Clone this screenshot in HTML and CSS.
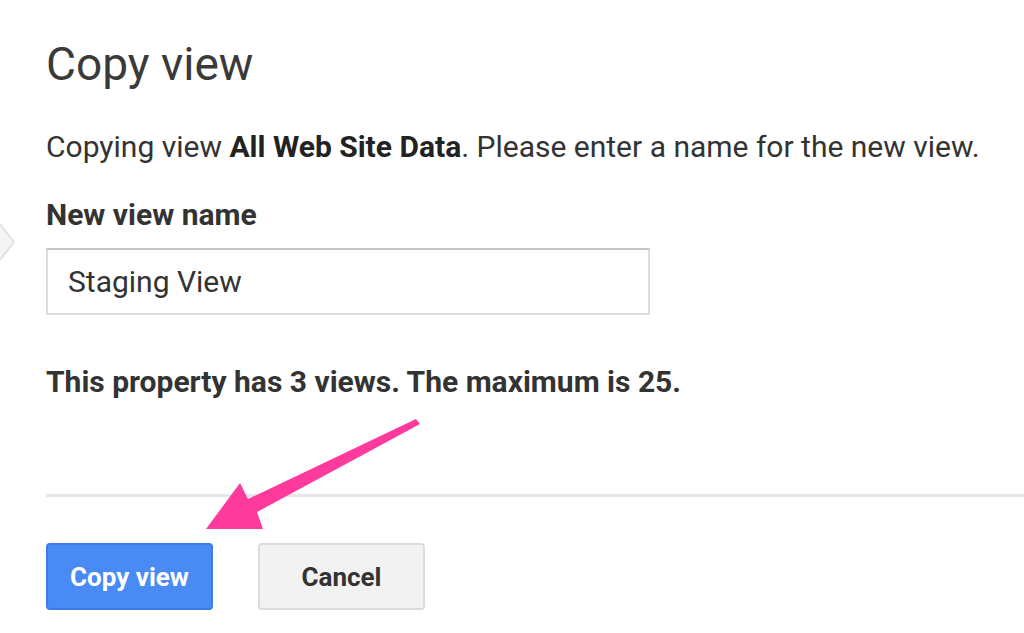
FILE: index.html
```html
<!DOCTYPE html>
<html lang="en">
<head>
    <meta charset="UTF-8">
    <title>Copy view</title>
    <link rel="stylesheet" href="styles.css">
</head>
<body>
    <!-- edge of the panel behind the dialog -->
    <svg class="side-chevron" width="16" height="40" viewBox="0 0 16 40">
        <path d="M0 2 L14 20 L0 38" fill="#f4f4f4" stroke="#e2e2e2" stroke-width="2"/>
    </svg>

    <div class="dialog">
        <h1 class="title">Copy view</h1>

        <p class="intro">Copying view <b>All Web Site Data</b>. Please enter a name for the new view.</p>

        <div class="form-group">
            <label for="viewName">New view name</label>
            <input type="text" id="viewName" value="Staging View">
        </div>

        <p class="limit">This property has 3 views. The maximum is 25.</p>

        <div class="actions">
            <button class="btn btn-primary">Copy view</button>
            <button class="btn btn-default">Cancel</button>
        </div>
    </div>

    <!-- pink callout arrow -->
    <svg class="callout" width="1024" height="633" viewBox="0 0 1024 633">
        <polygon points="416,419 420,424 257,512 263,529 206,529 240,483 248,499" fill="#ff3a9d"/>
    </svg>
</body>
</html>
```

FILE: styles.css
```css
body {
    margin: 0;
    background-color: #fff;
    font-family: Roboto, 'Liberation Sans', Arial, sans-serif;
    color: #333;
    overflow: hidden;
}
.dialog {
    padding: 32px 0 0 46px;
}
.title {
    margin: 0;
    font-size: 46px;
    font-weight: 400;
    line-height: 64px;
    color: #3a3a3a;
}
.intro {
    margin: 33px 0 0;
    font-size: 30px;
    line-height: 36px;
    color: #333;
}
.intro b {
    color: #222;
}
.form-group {
    margin-top: 32px;
}
label {
    display: block;
    font-size: 30px;
    font-weight: bold;
    line-height: 36px;
    color: #333;
    margin-bottom: 15px;
}
input {
    display: block;
    width: 604px;
    height: 67px;
    box-sizing: border-box;
    padding: 0 20px;
    border: 2px solid #dcdcdc;
    border-top-color: #c4c4c4;
    font-family: inherit;
    font-size: 30px;
    color: #333;
    outline: none;
}
.limit {
    margin: 49px 0 0;
    font-size: 30px;
    font-weight: bold;
    line-height: 36px;
    color: #333;
}
.actions {
    margin-top: 94px;
    padding-top: 46px;
    border-top: 3px solid #e6e6e6;
    display: flex;
    gap: 45px;
}
.btn {
    width: 167px;
    height: 67px;
    border-radius: 4px;
    font-family: inherit;
    font-size: 26px;
    font-weight: bold;
    cursor: pointer;
}
.btn-primary {
    background-color: #4a8af4;
    border: 2px solid #3b7ce9;
    color: #fff;
}
.btn-default {
    background-color: #f2f2f2;
    border: 2px solid #dcdcdc;
    color: #333;
}
.side-chevron {
    position: absolute;
    left: 0;
    top: 222px;
}
.callout {
    position: absolute;
    left: 0;
    top: 0;
    pointer-events: none;
}
```
